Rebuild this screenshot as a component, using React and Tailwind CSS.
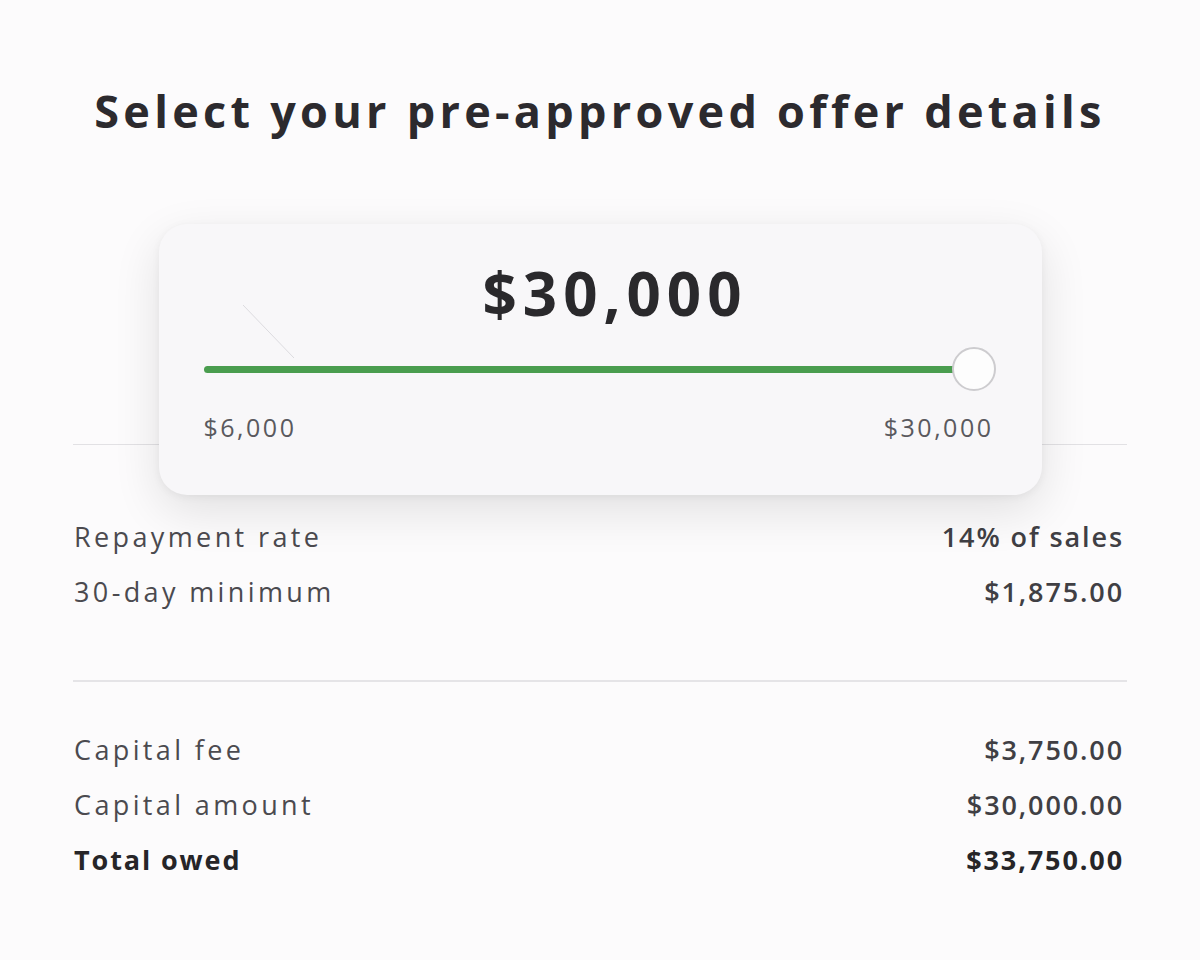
import React from 'react';

const rows = [
  { label: 'Repayment rate', value: '14% of sales' },
  { label: '30-day minimum', value: '$1,875.00' },
];

const totals = [
  { label: 'Capital fee', value: '$3,750.00' },
  { label: 'Capital amount', value: '$30,000.00' },
  { label: 'Total owed', value: '$33,750.00', strong: true },
];

const Row = ({ label, value, strong }) => (
  <div className="flex h-[55px] items-center justify-between">
    <span
      className={
        strong
          ? 'text-[27px] font-bold tracking-[0.07em] text-[#262528]'
          : 'text-[27px] tracking-[0.125em] text-[#4b4a4f]'
      }
    >
      {label}
    </span>
    <span
      className={
        strong
          ? 'text-[27px] font-bold tracking-[0.07em] text-[#262528]'
          : 'text-[27px] font-semibold tracking-[0.07em] text-[#403f44]'
      }
    >
      {value}
    </span>
  </div>
);

const AmountSlider = () => (
  <div className="relative z-10 mx-auto -mb-[51px] h-[271px] w-[883px] rounded-[28px] bg-[#f8f7f9] px-[45px] pt-[32px] shadow-[0_16px_48px_rgba(0,0,0,0.11),0_2px_8px_rgba(0,0,0,0.05)]">
    <svg className="absolute left-[84px] top-[81px]" width="52" height="54" viewBox="0 0 52 54">
      <line x1="0" y1="0" x2="51" y2="53" stroke="#dcdbdf" strokeWidth="1" />
    </svg>
    <div className="pl-[30px] text-center text-[60px] font-bold leading-[74px] tracking-[0.1em] text-[#2a292c]">
      $30,000
    </div>
    <div className="relative mt-[17px] flex h-[44px] items-center">
      <div className="mr-[24px] h-[7px] flex-1 rounded-full bg-[#4a9d4f]" />
      <div className="absolute right-[1px] h-[44px] w-[44px] rounded-full border-2 border-[#cdcccf] bg-[#fdfdfd]" />
    </div>
    <div className="mt-[18px] flex justify-between pr-[3px] text-[25px] tracking-[0.1em] text-[#5a595e]">
      <span>$6,000</span>
      <span>$30,000</span>
    </div>
  </div>
);

export default function App() {
  return (
    <div
      className="min-h-screen bg-[#fcfbfc] pt-[84px]"
      style={{ fontFamily: '"Open Sans", "Liberation Sans", sans-serif' }}
    >
      <h1 className="text-center text-[45px] font-bold leading-[54px] tracking-[0.095em] text-[#2c2a2e]">
        Select your pre-approved offer details
      </h1>

      <div className="mx-auto mt-[86px] w-[1054px]">
        <div className="border-b border-[#e2e1e4]">
          <AmountSlider />
        </div>

        <div className="pl-[1px] pr-[3px] pt-[65px]">
          {rows.map((r) => (
            <Row key={r.label} {...r} />
          ))}
        </div>

        <div className="mt-[60px] border-b-2 border-[#e5e4e7]" />

        <div className="pl-[1px] pr-[3px] pt-[41px]">
          {totals.map((r) => (
            <Row key={r.label} {...r} />
          ))}
        </div>
      </div>
    </div>
  );
}
